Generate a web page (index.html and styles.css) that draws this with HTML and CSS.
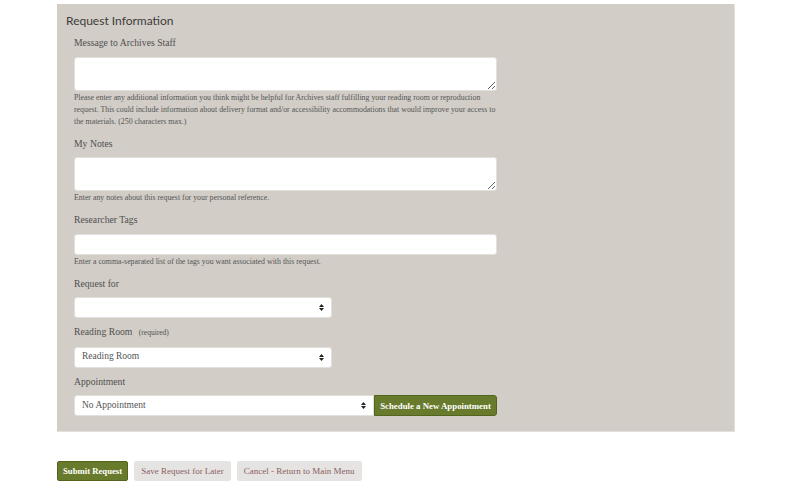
FILE: index.html
```html
<!DOCTYPE html>
<html lang="en">
<head>
<meta charset="utf-8">
<title>Request Information</title>
<link rel="stylesheet" href="styles.css">
</head>
<body>
<div class="page">
  <section class="panel">
    <h2 class="panel-title">Request Information</h2>
    <div class="fields">
      <div class="group has-help">
        <label class="label">Message to Archives Staff</label>
        <textarea class="textarea"></textarea>
        <p class="help">Please enter any additional information you think might be helpful for Archives staff fulfilling your reading room or reproduction request. This could include information about delivery format and/or accessibility accommodations that would improve your access to the materials. (250 characters max.)</p>
      </div>
      <div class="group has-help">
        <label class="label">My Notes</label>
        <textarea class="textarea"></textarea>
        <p class="help">Enter any notes about this request for your personal reference.</p>
      </div>
      <div class="group has-help">
        <label class="label">Researcher Tags</label>
        <input class="input" type="text">
        <p class="help">Enter a comma-separated list of the tags you want associated with this request.</p>
      </div>
      <div class="group">
        <label class="label">Request for</label>
        <div class="select-wrap short">
          <select class="select"><option></option></select>
          <svg class="arrows" width="5" height="7" viewBox="0 0 5 7"><path d="M0 3L2.5 0L5 3Z M0 4L2.5 7L5 4Z" fill="#222"/></svg>
        </div>
      </div>
      <div class="group">
        <label class="label">Reading Room <span class="req">(required)</span></label>
        <div class="select-wrap short">
          <select class="select"><option>Reading Room</option></select>
          <svg class="arrows" width="5" height="7" viewBox="0 0 5 7"><path d="M0 3L2.5 0L5 3Z M0 4L2.5 7L5 4Z" fill="#222"/></svg>
        </div>
      </div>
      <div class="group">
        <label class="label">Appointment</label>
        <div class="combo">
          <div class="select-wrap wide">
            <select class="select joined"><option>No Appointment</option></select>
            <svg class="arrows" width="5" height="7" viewBox="0 0 5 7"><path d="M0 3L2.5 0L5 3Z M0 4L2.5 7L5 4Z" fill="#222"/></svg>
          </div>
          <button class="btn btn-green btn-addon" type="button">Schedule a New Appointment</button>
        </div>
      </div>
    </div>
  </section>
  <div class="actions">
    <button class="btn btn-green btn-submit" type="button">Submit Request</button>
    <button class="btn btn-grey" type="button">Save Request for Later</button>
    <button class="btn btn-grey" type="button">Cancel - Return to Main Menu</button>
  </div>
</div>
</body>
</html>
```
FILE: styles.css
```css
html, body {
  margin: 0;
  padding: 0;
  background: #ffffff;
}
body {
  font-family: "Liberation Serif", "Times New Roman", serif;
  color: #555;
}
.page {
  padding: 4px 0 0 57px;
}
.panel {
  width: 678px;
  height: 428px;
  box-sizing: border-box;
  background: #d2cdc7;
  border-right: 1px solid #e4e1dc;
  border-bottom: 1px solid #e4e1dc;
  padding: 9px 9px;
}
.panel-title {
  margin: 0;
  font-family: "Lato", "DejaVu Sans", sans-serif;
  font-weight: 400;
  font-size: 12px;
  line-height: 15px;
  color: #3c3c3c;
}
.fields {
  margin: 9px 0 0 8px;
  width: 423px;
}
.group {
  margin-bottom: 8px;
}
.group.has-help {
  margin-bottom: 10px;
}
.label {
  display: block;
  font-size: 9.7px;
  line-height: 12px;
  color: #505050;
  margin-bottom: 7.5px;
}
.req {
  font-size: 7.5px;
  margin-left: 4px;
}
.textarea, .input, .select {
  display: block;
  width: 100%;
  box-sizing: border-box;
  background: #fff;
  border: 1px solid #e2e0dc;
  border-radius: 3px;
  margin: 0;
  font-family: inherit;
}
.textarea {
  height: 34px;
  resize: vertical;
}
.input {
  height: 21px;
}
.help {
  margin: 1px 0 0;
  font-size: 7.85px;
  line-height: 12px;
  color: #555;
}
.select-wrap {
  position: relative;
}
.select-wrap.short { width: 258px; }
.select-wrap.wide { width: 300px; }
.select {
  appearance: none;
  -webkit-appearance: none;
  height: 21px;
  padding: 0 0 2px 7px;
  font-size: 9.5px;
  color: #555;
}
.arrows {
  position: absolute;
  right: 8px;
  top: 7px;
  pointer-events: none;
}
.combo {
  display: flex;
}
.select.joined {
  border-radius: 3px 0 0 3px;
}
.btn {
  font-family: inherit;
  font-size: 9px;
  height: 20px;
  padding: 0 6px;
  border-radius: 2px;
  cursor: pointer;
}
.btn-green {
  background: #687a2b;
  border: 1px solid #54641e;
  color: #fff;
  font-weight: 700;
}
.btn-submit {
  font-size: 8.7px;
  padding: 0 5px;
}
.btn-addon {
  width: 123px;
  height: 21px;
  padding: 0;
  font-size: 8.8px;
  border-radius: 0 3px 3px 0;
}
.btn-grey {
  background: #e5e4e3;
  border: 1px solid #e5e4e3;
  color: #8c5e5e;
}
.actions {
  display: flex;
  gap: 6px;
  margin-top: 29px;
}
```
